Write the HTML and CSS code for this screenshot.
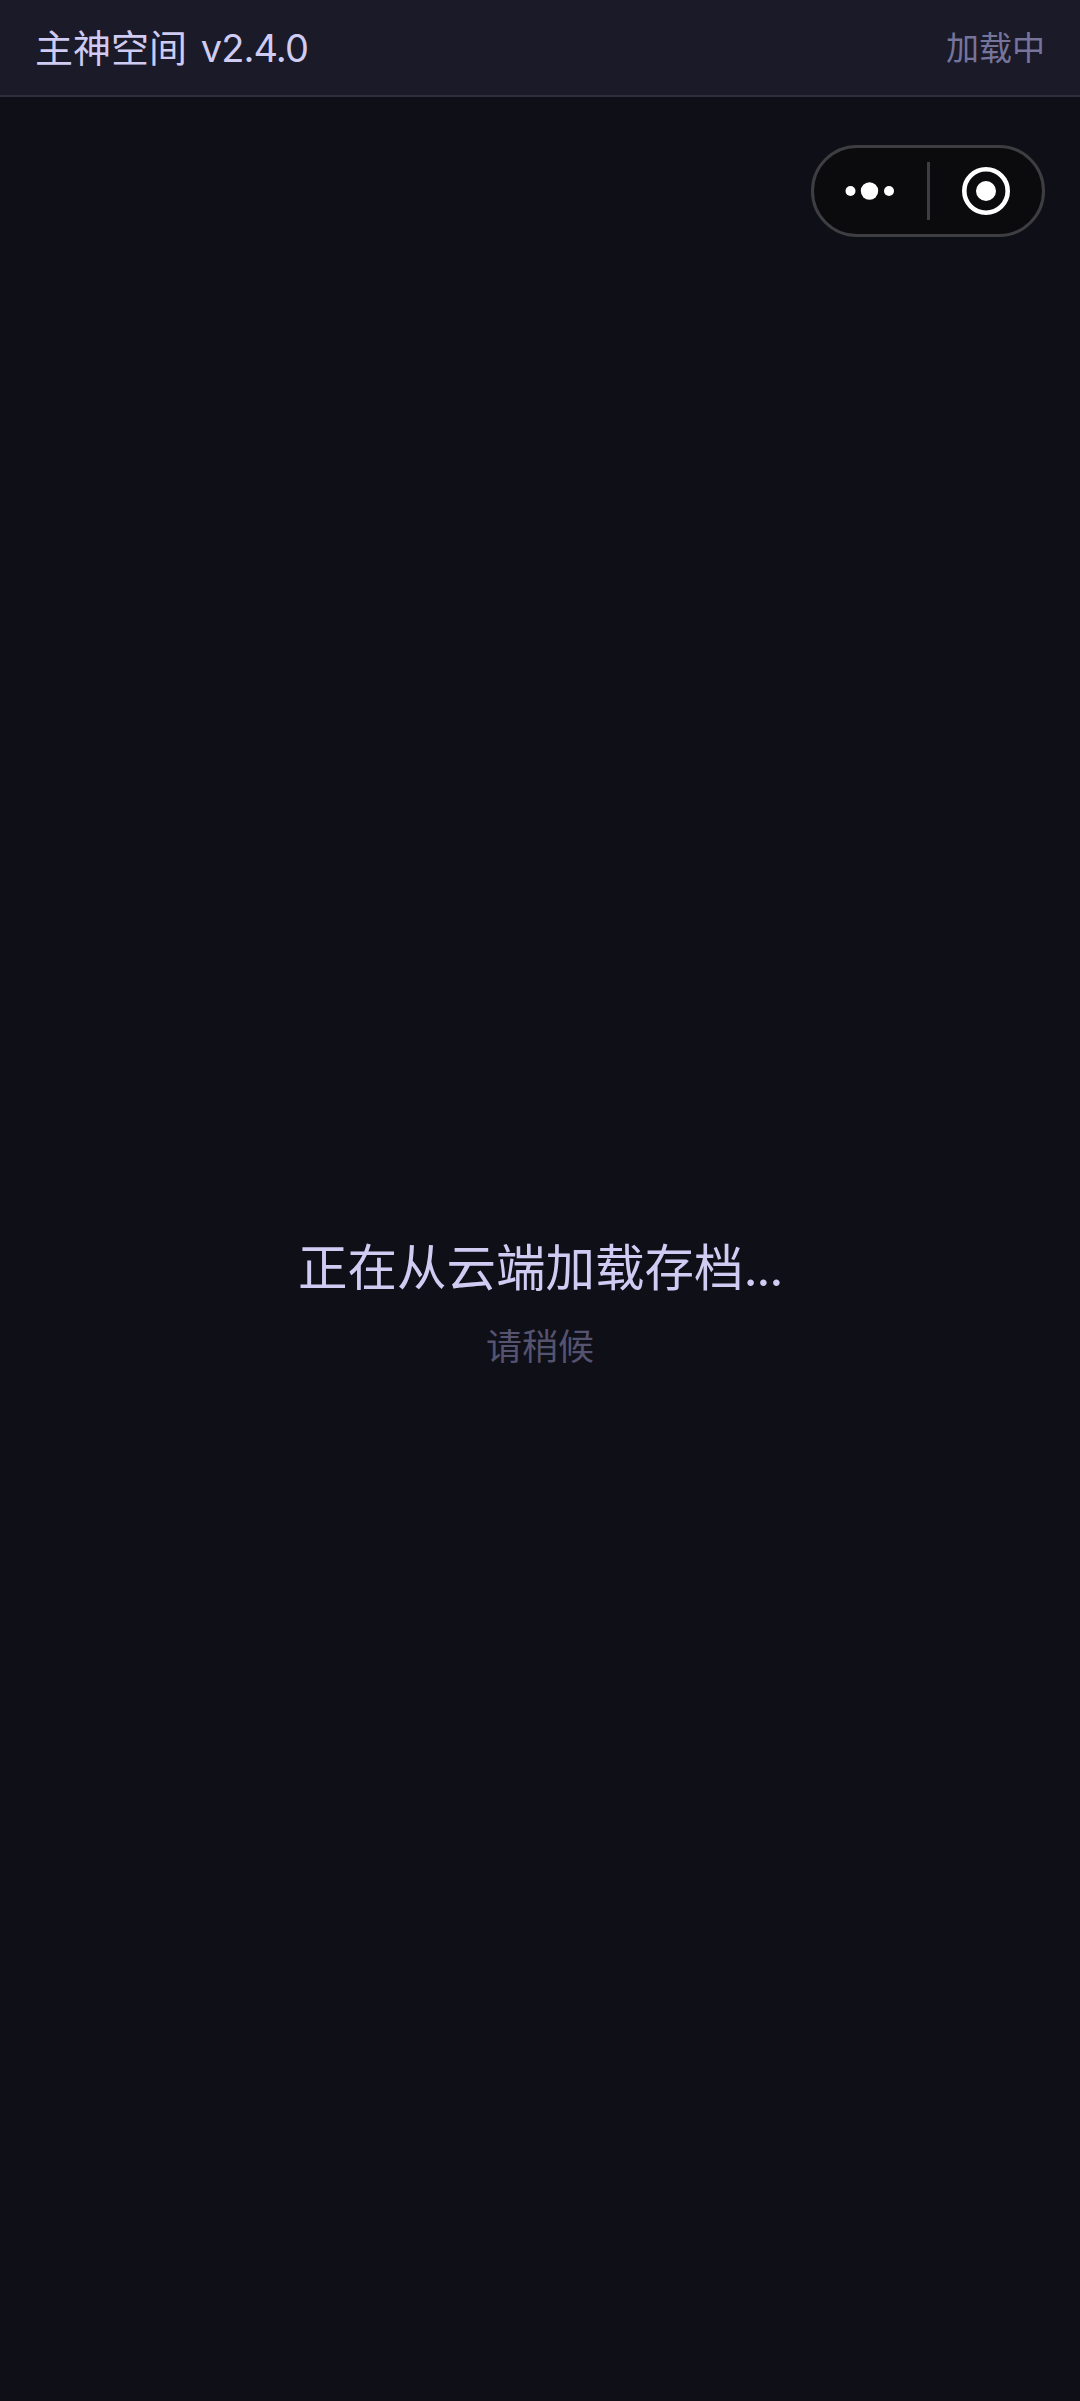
FILE: index.html
```
<!DOCTYPE html>
<html lang="zh-CN">
<head>
<meta charset="utf-8">
<title>主神空间</title>
<link rel="stylesheet" href="styles.css">
</head>
<body>
<header class="topbar">
  <span class="title">主神空间 <span class="version">v2.4.0</span></span>
  <span class="status">加载中</span>
</header>
<div class="capsule">
  <div class="capsule-more">
    <svg width="50" height="20" viewBox="0 0 50 20"><circle cx="5.5" cy="10" r="5" fill="#fff"/><circle cx="24.5" cy="10" r="8.7" fill="#fff"/><circle cx="44" cy="10" r="5" fill="#fff"/></svg>
  </div>
  <div class="capsule-divider"></div>
  <div class="capsule-close">
    <svg width="50" height="50" viewBox="0 0 50 50"><circle cx="25" cy="25" r="21.7" fill="none" stroke="#fff" stroke-width="4.6"/><circle cx="25" cy="25" r="10" fill="#fff"/></svg>
  </div>
</div>
<main class="loading">
  <div class="loading-title">正在从云端加载存档<span class="dots">...</span></div>
  <div class="loading-sub">请稍候</div>
</main>
</body>
</html>
```
FILE: styles.css
```
* { box-sizing: border-box; }
html, body { margin: 0; height: 100%; }
body {
  background: #0e0f17;
  font-family: Inter, "Noto Sans CJK SC", sans-serif;
  display: flex;
  flex-direction: column;
  position: relative;
  overflow: hidden;
}
.topbar {
  height: 97px;
  flex: none;
  background: #1a1a28;
  border-bottom: 2px solid #2e2e3c;
  display: flex;
  align-items: center;
  justify-content: space-between;
  padding: 0 35px 4px;
}
.title { font-size: 38px; color: #cfcbf2; font-weight: 400; word-spacing: 3px; }
.version { letter-spacing: -0.9px; }
.status { font-size: 33px; color: #77749c; font-weight: 400; }
.capsule {
  position: absolute;
  left: 811px;
  top: 145px;
  width: 234px;
  height: 92px;
  border-radius: 46px;
  border: 3px solid #3e3e42;
  background: #0b0b0e;
  display: flex;
  align-items: center;
}
.capsule-more { flex: 1; display: flex; justify-content: center; }
.capsule-divider { width: 3px; height: 58px; background: #3e3e42; flex: none; }
.capsule-close { flex: 1; display: flex; justify-content: center; }
.loading {
  flex: 1;
  display: flex;
  flex-direction: column;
  align-items: center;
  padding-top: 1139px;
}
.loading-title { font-size: 49.5px; color: #cfcbf2; font-weight: 400; line-height: 64px; }
.dots { letter-spacing: -1.5px; }
.loading-sub { font-size: 36px; color: #55536f; font-weight: 400; line-height: 48px; margin-top: 23px; }
```
